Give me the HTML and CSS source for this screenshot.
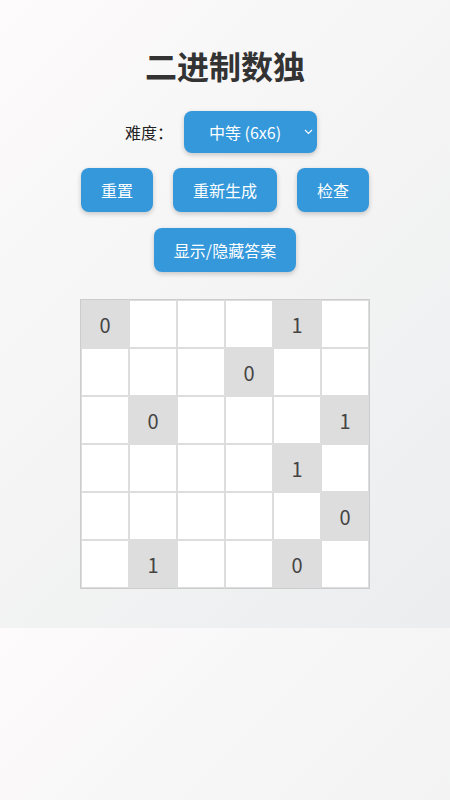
FILE: index.html
```html
<!DOCTYPE html>
<html lang="zh-CN">
<head>
<meta charset="utf-8">
<title>二进制数独</title>
<link rel="stylesheet" href="styles.css">
</head>
<body>
  <h1 class="title">二进制数独</h1>
  <div class="difficulty">
    <label class="difficulty-label" for="level">难度：</label>
    <select id="level" class="difficulty-select">
      <option>简单 (4x4)</option>
      <option selected>中等 (6x6)</option>
      <option>困难 (8x8)</option>
    </select>
  </div>
  <div class="actions">
    <button class="btn">重置</button>
    <button class="btn">重新生成</button>
    <button class="btn">检查</button>
    <button class="btn">显示/隐藏答案</button>
  </div>
  <div class="board">
    <div class="cell fixed">0</div><div class="cell"></div><div class="cell"></div><div class="cell"></div><div class="cell fixed">1</div><div class="cell"></div>
    <div class="cell"></div><div class="cell"></div><div class="cell"></div><div class="cell fixed">0</div><div class="cell"></div><div class="cell"></div>
    <div class="cell"></div><div class="cell fixed">0</div><div class="cell"></div><div class="cell"></div><div class="cell"></div><div class="cell fixed">1</div>
    <div class="cell"></div><div class="cell"></div><div class="cell"></div><div class="cell"></div><div class="cell fixed">1</div><div class="cell"></div>
    <div class="cell"></div><div class="cell"></div><div class="cell"></div><div class="cell"></div><div class="cell"></div><div class="cell fixed">0</div>
    <div class="cell"></div><div class="cell fixed">1</div><div class="cell"></div><div class="cell"></div><div class="cell fixed">0</div><div class="cell"></div>
  </div>
</body>
</html>
```

FILE: styles.css
```css
body {
  margin: 0;
  padding: 20px 20px 39px;
  font-family: "Noto Sans CJK SC", sans-serif;
  background: linear-gradient(135deg, #fdfbfb 0%, #ebedee 100%);
  display: flex;
  flex-direction: column;
  align-items: center;
}

.title {
  font-size: 32px;
  font-weight: bold;
  color: #333;
  margin: 22px 0 23px;
}

.difficulty {
  display: flex;
  align-items: center;
  justify-content: center;
  gap: 11px;
  padding-right: 8px;
  margin-bottom: 15px;
}

.difficulty-label {
  font-size: 16px;
  color: #222;
}

.difficulty-select {
  -webkit-appearance: none;
  appearance: none;
  box-sizing: border-box;
  width: 133px;
  font-family: inherit;
  font-size: 16px;
  color: #fff;
  background-color: #3498db;
  background-image: url("data:image/svg+xml;utf8,<svg xmlns='http://www.w3.org/2000/svg' width='9' height='6' viewBox='0 0 9 6'><path d='M1 1l3.5 3.5L8 1' fill='none' stroke='white' stroke-width='1.1'/></svg>");
  background-repeat: no-repeat;
  background-position: right 4px center;
  border: none;
  border-radius: 8px;
  padding: 9px 20px 9px 25px;
  box-shadow: 0 2px 5px rgba(0, 0, 0, 0.2);
}

.actions {
  display: flex;
  flex-wrap: wrap;
  justify-content: center;
  column-gap: 20px;
  row-gap: 16px;
  width: 300px;
  margin-bottom: 27px;
}

.btn {
  font-family: inherit;
  font-size: 16px;
  color: #fff;
  background-color: #3498db;
  border: none;
  border-radius: 8px;
  padding: 10px 20px;
  box-shadow: 0 2px 5px rgba(0, 0, 0, 0.2);
}

.board {
  display: grid;
  grid-template-columns: repeat(6, 48px);
  grid-auto-rows: 48px;
  border: 1px solid #ccc;
}

.cell {
  box-sizing: border-box;
  border: 1px solid #ddd;
  background: #fff;
  display: flex;
  align-items: center;
  justify-content: center;
  font-size: 20px;
  color: #444;
}

.cell.fixed {
  background: #ddd;
}
```
